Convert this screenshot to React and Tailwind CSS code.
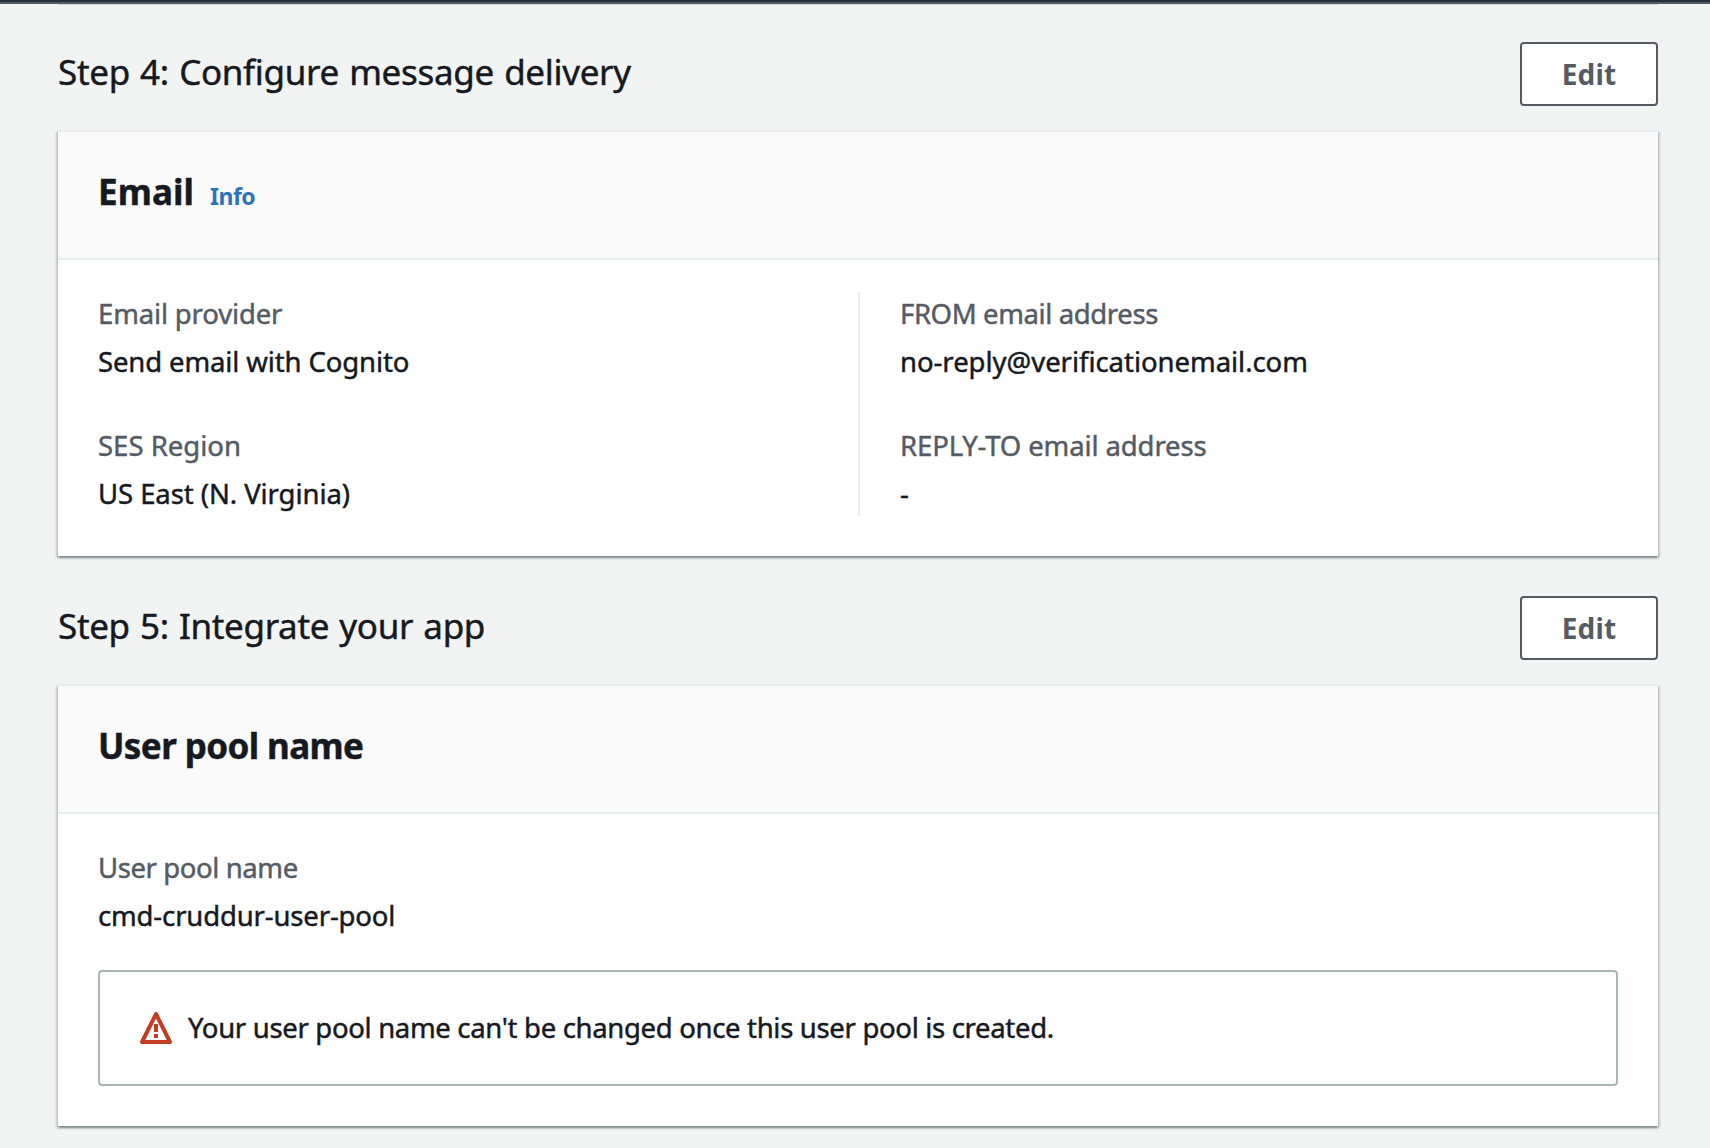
import React from "react";

function WarningIcon() {
  return (
    <svg viewBox="0 0 16 16" className="h-8 w-8 shrink-0 text-[#c43d22]" fill="none" stroke="currentColor" strokeWidth="2" aria-hidden="true">
      <path d="M8 1l7 14H1L8 1z" strokeLinejoin="round" />
      <path d="M8 6v4M8 11v2" />
    </svg>
  );
}

function StepHeader({ title, tracking }) {
  return (
    <div className="flex h-16 items-start justify-between">
      <h2 className={`pt-2 text-[35px] leading-[44px] [word-spacing:1.5px] ${tracking}`}>{title}</h2>
      <button
        type="button"
        className="h-16 w-[138px] rounded-[4px] border-2 border-[#545b64] bg-white text-[28px] leading-[44px] font-bold tracking-[0.15px] text-[#545b64] [-webkit-text-stroke:0px]"
      >
        Edit
      </button>
    </div>
  );
}

function Card({ title, tracking, info, children }) {
  return (
    <section className="mt-6 border-t-2 border-[#eaeded] bg-white shadow-[0_2px_2px_0_rgba(0,28,36,0.3),2px_2px_2px_0_rgba(0,28,36,0.15),-2px_2px_2px_0_rgba(0,28,36,0.15)]">
      <header className="flex h-32 items-baseline border-b-2 border-[#eaeded] bg-[#fafafa] pt-[38px] pl-10">
        <h3 className={`text-[35px] leading-[44px] font-bold ${tracking}`}>{title}</h3>
        {info && (
          <a href="#info" className="ml-[16px] text-[23px] leading-[30px] font-bold tracking-[-0.55px] text-[#2e73b8] [-webkit-text-stroke:0px]">
            Info
          </a>
        )}
      </header>
      <div className="px-10 pt-8 pb-10">{children}</div>
    </section>
  );
}

function Field({ label, value, labelTracking, valueTracking }) {
  return (
    <div className="flex flex-col gap-1 text-[27.5px] leading-[44px]">
      <div className={`h-11 text-[#545b64] ${labelTracking}`}>{label}</div>
      <div className={`h-11 ${valueTracking}`}>{value}</div>
    </div>
  );
}

export default function App() {
  return (
    <div className="flex h-[1148px] w-full flex-col overflow-hidden bg-[#f2f3f3] font-['Noto_Sans',sans-serif] text-[#16191f] [-webkit-text-stroke:0.45px_currentColor]">
      <div className="h-1 shrink-0 border-b-2 border-[#545b64] bg-[#232f3e]" />
      <div className="mr-[52px] ml-[58px] h-px shrink-0 bg-[#cdd1d2]" />
      <main className="mr-[52px] ml-[58px] pt-[37px]">
        <StepHeader title="Step 4: Configure message delivery" tracking="tracking-[-0.32px]" />
        <Card title="Email" tracking="tracking-[0.1px]" info>
          <div className="grid grid-cols-2">
            <div className="flex flex-col gap-10">
              <Field label="Email provider" value="Send email with Cognito" labelTracking="tracking-[-0.16px]" valueTracking="tracking-[-0.12px]" />
              <Field label="SES Region" value="US East (N. Virginia)" labelTracking="tracking-normal" valueTracking="tracking-[-0.07px]" />
            </div>
            <div className="flex flex-col gap-10 border-l-2 border-[#eaeded] pl-10">
              <Field label="FROM email address" value="no-reply@verificationemail.com" labelTracking="tracking-[-0.38px]" valueTracking="tracking-[-0.04px]" />
              <Field label="REPLY-TO email address" value="-" labelTracking="tracking-[-0.12px]" valueTracking="tracking-normal" />
            </div>
          </div>
        </Card>

        <div className="h-10" />

        <StepHeader title="Step 5: Integrate your app" tracking="tracking-[-0.34px]" />
        <Card title="User pool name" tracking="tracking-[-0.6px]">
          <Field label="User pool name" value="cmd-cruddur-user-pool" labelTracking="tracking-[-0.4px]" valueTracking="tracking-[-0.15px]" />
          <div className="mt-8 flex h-[116px] items-center gap-4 rounded-[4px] border-2 border-[#aab7b8] pl-10">
            <WarningIcon />
            <p className="text-[27.5px] leading-[44px] tracking-[-0.32px]">
              Your user pool name can't be changed once this user pool is created.
            </p>
          </div>
        </Card>
      </main>
    </div>
  );
}
